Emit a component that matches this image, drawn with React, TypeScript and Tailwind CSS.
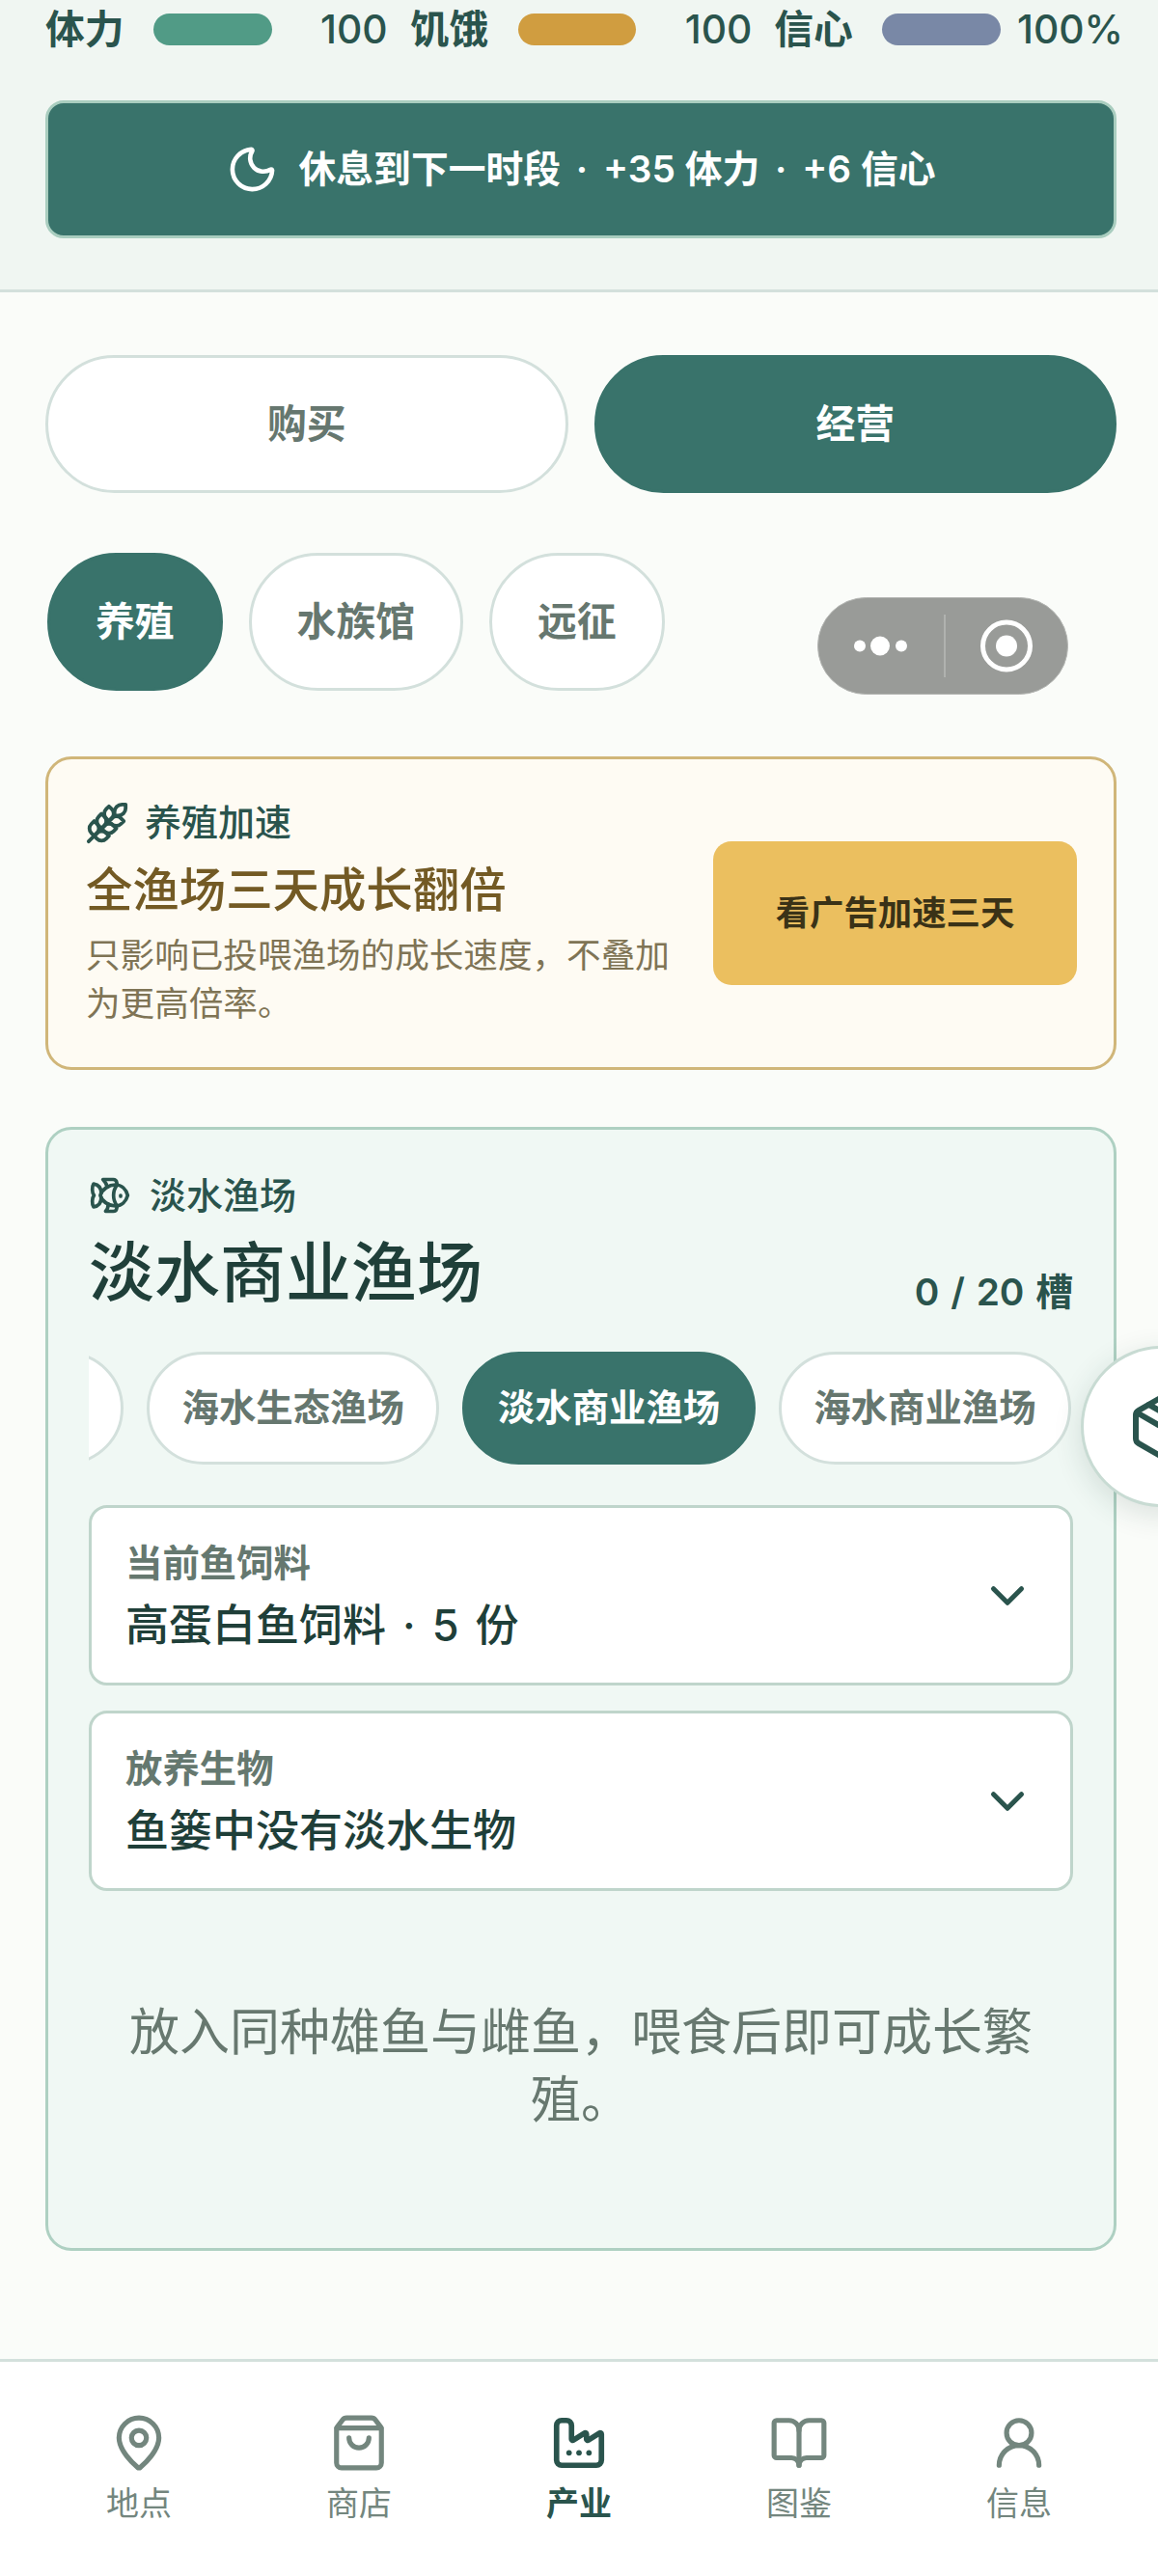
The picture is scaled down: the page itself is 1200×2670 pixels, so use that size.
import { BookOpen, ChevronDown, Factory, Fish, MapPin, Moon, Package, ShoppingBag, UserRound, Wheat } from "lucide-react";

const stats = [
  { label: "体力", value: "100", bar: "bg-[#519b86]" },
  { label: "饥饿", value: "100", bar: "bg-[#d09d40]" },
  { label: "信心", value: "100%", bar: "bg-[#7988a6]" },
];

const navItems = [
  { label: "地点", icon: MapPin },
  { label: "商店", icon: ShoppingBag },
  { label: "产业", icon: Factory, active: true },
  { label: "图鉴", icon: BookOpen },
  { label: "信息", icon: UserRound },
];

const pillOn = "border-[#39736b] bg-[#39736b] text-white";
const pillOff = "border-[#d3e0dc] bg-white text-[#66776f]";

function Selector({ label, value }: { label: string; value: string }) {
  return (
    <div className="flex h-[187px] items-center justify-between rounded-[19px] border-[3px] border-[#bfd5cb] bg-white pl-[35px] pr-[36px]">
      <div>
        <div className="text-[38.4px] font-semibold leading-[50px] text-[#65786f]">{label}</div>
        <div className="mt-[12px] text-[45px] font-medium leading-[56px] text-[#1f3f39] [word-spacing:5px]">{value}</div>
      </div>
      <ChevronDown size={58} strokeWidth={2.1} className="text-[#2a544d]" />
    </div>
  );
}

export default function App() {
  return (
    <div className="relative h-[2670px] w-[1200px] overflow-hidden bg-[#fafcf9] font-[Inter,'Noto_Sans_CJK_SC',sans-serif]">
      <header className="border-b-[3px] border-[#d3e0dc] bg-[#f0f6f2] pb-[53px] pl-[47px] pr-[43px]">
        <div className="grid h-[56px] grid-cols-3 gap-x-[23px]">
          {stats.map((s) => (
            <div key={s.label} className="flex items-center whitespace-nowrap text-[40.8px] font-medium text-[#2a544d]">
              <span className="w-[80px] shrink-0 font-semibold">{s.label}</span>
              <div className={`ml-[32px] h-[33px] flex-1 rounded-full ${s.bar}`} />
              <span className="ml-[17px] w-[103px] shrink-0 text-right">{s.value}</span>
            </div>
          ))}
        </div>
        <button className="mt-[48px] flex h-[143px] w-full items-center justify-center gap-[20px] rounded-[19px] border-[3px] border-[#a9cdbf] bg-[#39736b] text-[38.8px] font-semibold text-white">
          <Moon size={55} strokeWidth={2} />
          <span>
            休息到下一时段<span className="mx-[6px]"> · </span>+35 体力<span className="mx-[6px]"> · </span>+6 信心
          </span>
        </button>
      </header>

      <main className="pl-[47px] pr-[43px] pt-[65px]">
        <div className="grid grid-cols-2 gap-x-[27px]">
          <button className={`h-[143px] rounded-full border-[3px] text-[40.8px] font-semibold ${pillOff}`}>购买</button>
          <button className={`h-[143px] rounded-full border-[3px] text-[40.8px] font-semibold ${pillOn}`}>经营</button>
        </div>

        <div className="mt-[62px] flex gap-[27px] pl-[2px]">
          <button className={`h-[143px] rounded-full border-[3px] px-[47px] text-[40.8px] font-semibold ${pillOn}`}>养殖</button>
          <button className={`h-[143px] rounded-full border-[3px] px-[47px] text-[40.8px] font-semibold ${pillOff}`}>水族馆</button>
          <button className={`h-[143px] rounded-full border-[3px] px-[47px] text-[40.8px] font-semibold ${pillOff}`}>远征</button>
        </div>

        <section className="mt-[68px] flex h-[325px] items-center gap-[27px] rounded-[27px] border-[3px] border-[#d0b679] bg-[#fefbf3] pl-[39px] pr-[38px]">
          <div className="min-w-0 flex-1">
            <div className="flex h-[50px] items-center gap-[16px] text-[38px] font-medium text-[#2a544d]">
              <Wheat size={46} strokeWidth={2} className="-ml-[1px]" />
              养殖加速
            </div>
            <div className="mt-[11px] text-[48.4px] font-medium leading-[68px] text-[#735a24]">全渔场三天成长翻倍</div>
            <p className="mt-[9px] text-[35.6px] leading-[50px] text-[#7f7455]">只影响已投喂渔场的成长速度，不叠加为更高倍率。</p>
          </div>
          <button className="h-[149px] w-[377px] shrink-0 rounded-[19px] bg-[#ebbf5f] text-[35.4px] font-semibold text-[#3a3217]">看广告加速三天</button>
        </section>

        <section className="mt-[59px] h-[1165px] rounded-[27px] border-[3px] border-[#aed0c2] bg-[#f0f8f4] px-[42px] pt-[43px]">
          <div className="flex h-[50px] items-center gap-[19px] text-[38px] font-medium text-[#2a544d]">
            <Fish size={44} strokeWidth={2} />
            淡水渔场
          </div>
          <div className="mt-[15px] flex items-end justify-between">
            <h2 className="text-[68px] font-medium leading-[80px] text-[#1f3f39]">淡水商业渔场</h2>
            <span className="text-[38.8px] font-semibold leading-[40px] text-[#2a544d] [word-spacing:2px]">0 / 20 槽</span>
          </div>

          <div className="mt-[42px] overflow-hidden">
            <div className="-ml-[267px] flex gap-[24px]">
              {/* scrolled away, only its right end shows */}
              <div className={`h-[117px] w-[303px] shrink-0 rounded-full border-[3px] ${pillOff}`} />
              {["海水生态渔场", "淡水商业渔场", "海水商业渔场"].map((name, i) => (
                <button key={name} className={`h-[117px] shrink-0 rounded-full border-[3px] px-[33.5px] text-[38.4px] font-semibold ${i === 1 ? pillOn : pillOff}`}>
                  {name}
                </button>
              ))}
            </div>
          </div>

          <div className="mt-[42px] flex flex-col gap-[26px]">
            <Selector label="当前鱼饲料" value="高蛋白鱼饲料 · 5 份" />
            <Selector label="放养生物" value="鱼篓中没有淡水生物" />
          </div>

          <p className="mt-[112px] px-[40px] text-center text-[52px] leading-[70px] text-[#67786f]">放入同种雄鱼与雌鱼，喂食后即可成长繁殖。</p>
        </section>
      </main>

      <nav className="absolute bottom-0 left-0 right-0 grid h-[225px] grid-cols-5 border-t-[3px] border-[#d3e0dc] bg-white px-[30px] pt-[53px]">
        {navItems.map((item) => {
          const Icon = item.icon;
          return (
            <div key={item.label} className={`flex flex-col items-center ${item.active ? "text-[#2a544d]" : "text-[#73867e]"}`}>
              <Icon size={62} strokeWidth={item.active ? 2.2 : 2} />
              <span className={`mt-[10px] text-[34px] leading-[44px] ${item.active ? "font-bold" : "font-normal"}`}>{item.label}</span>
            </div>
          );
        })}
      </nav>

      {/* mini program capsule, sits over the page */}
      <div className="absolute left-[847px] top-[619px] flex h-[101px] w-[260px] items-center rounded-full border border-[#b4b6b3] bg-[#999b98]">
        <svg width="130" height="65" viewBox="0 0 130 65" className="shrink-0">
          <circle cx="43" cy="32.5" r="6" fill="#fff" />
          <circle cx="64" cy="32.5" r="10" fill="#fff" />
          <circle cx="86" cy="32.5" r="6" fill="#fff" />
        </svg>
        <div className="h-[65px] w-[3px] bg-[#b0b2af]" />
        <svg width="126" height="65" viewBox="0 0 126 65" className="shrink-0">
          <circle cx="63" cy="32.5" r="24.5" fill="none" stroke="#fff" strokeWidth="5" />
          <circle cx="63" cy="32.5" r="11" fill="#fff" />
        </svg>
      </div>

      {/* floating backpack button, half off the right edge */}
      <div className="absolute left-[1120px] top-[1395px] flex h-[167px] w-[167px] items-center justify-center rounded-full border-[3px] border-[#c8dbd3] bg-white text-[#2a544d] shadow-[0_8px_30px_rgba(31,63,57,0.14)]">
        <Package size={72} strokeWidth={2} />
      </div>
    </div>
  );
}
